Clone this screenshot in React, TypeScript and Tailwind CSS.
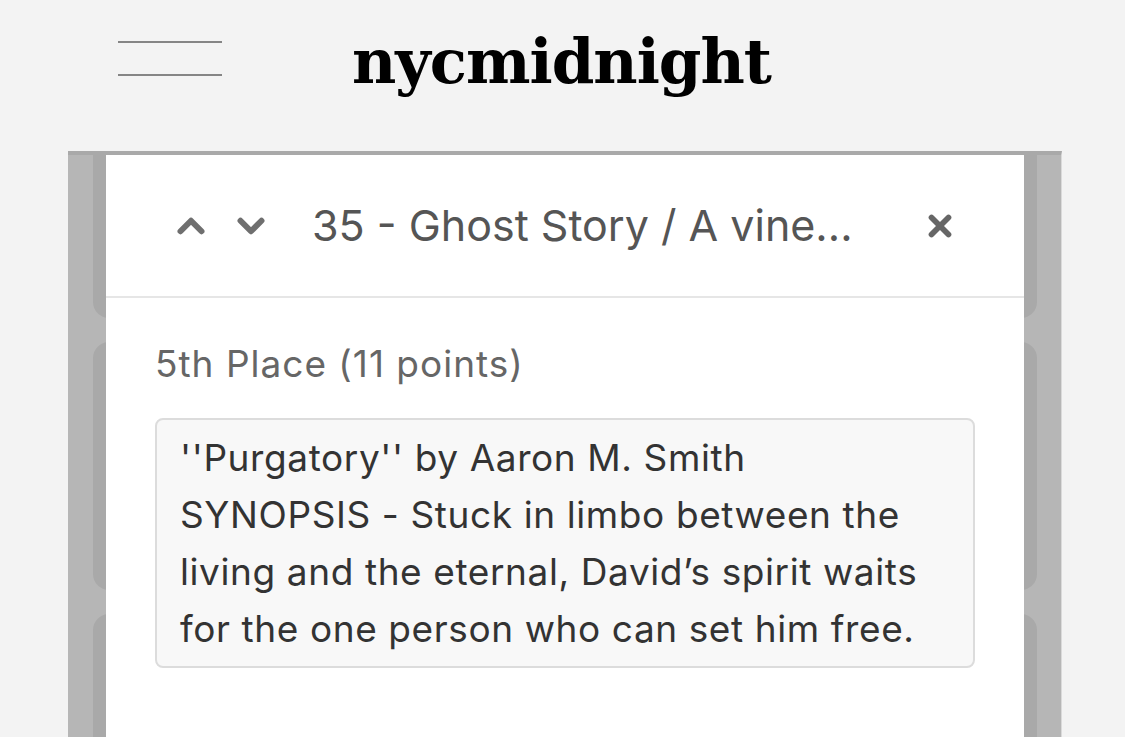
import { ChevronUp, ChevronDown, X } from "lucide-react";

const sans = { fontFamily: "Inter, 'Noto Sans', sans-serif" };

const Header = () => (
  <header className="h-[151px] flex items-start">
    <div className="w-[104px] ml-[118px] mt-[41px] flex flex-col gap-[31px]">
      <span className="block h-[2px] bg-[#858585]" />
      <span className="block h-[2px] bg-[#858585]" />
    </div>
    <h1
      className="ml-[130px] mt-[22px] text-[61px] leading-[80px] font-bold text-black tracking-[-1px]"
      style={{ fontFamily: "'DejaVu Serif', serif" }}
    >
      nycmidnight
    </h1>
  </header>
);

const BackgroundCards = () => (
  <div className="flex flex-col gap-[24px] px-[25px] -mt-[81px]">
    {[0, 1, 2, 3].map((i) => (
      <div key={i} className="h-[248px] rounded-[16px] bg-[#e2e2e2]" />
    ))}
  </div>
);

const Modal = () => (
  <div className="absolute left-[38px] right-[38px] top-[4px] bottom-0 bg-white" style={sans}>
    <div className="h-[143px] flex items-center border-b-2 border-[#e6e6e6] pl-[64px] pr-[67px]">
      <ChevronUp className="w-[42px] h-[42px] text-[#6f6f6f]" strokeWidth={3.4} />
      <ChevronDown className="w-[42px] h-[42px] text-[#6f6f6f] ml-[18px]" strokeWidth={3.4} />
      <div className="ml-[40px] flex-1 text-[43px] text-[#555] truncate">
        35 - Ghost Story / A vine...
      </div>
      <X className="w-[34px] h-[34px] text-[#666]" strokeWidth={4} />
    </div>
    <div className="px-[49px] pt-[40px]">
      <p className="text-[37px] leading-[52px] tracking-[1px] text-[#666]">5th Place (11 points)</p>
      <div className="mt-[28px] w-[820px] rounded-[8px] border-2 border-[#dcdcdc] bg-[#f8f8f8] px-[23px] py-[9px] text-[37px] leading-[57px] tracking-[0.6px] text-[#333]">
        ''Purgatory'' by Aaron M. Smith
        <br />
        SYNOPSIS - Stuck in limbo between the living and the eternal, David’s spirit waits for the one person who can set him free.
      </div>
    </div>
  </div>
);

export default function App() {
  return (
    <div className="w-[1125px] h-[737px] overflow-hidden bg-[#f3f3f3]">
      <Header />
      <div className="relative ml-[68px] w-[994px] h-[586px] overflow-hidden">
        <BackgroundCards />
        <div className="absolute inset-0 bg-black/25 border-r border-r-[#dadada] border-t-4 border-t-[#a9a9a9]" />
        <Modal />
      </div>
    </div>
  );
}
